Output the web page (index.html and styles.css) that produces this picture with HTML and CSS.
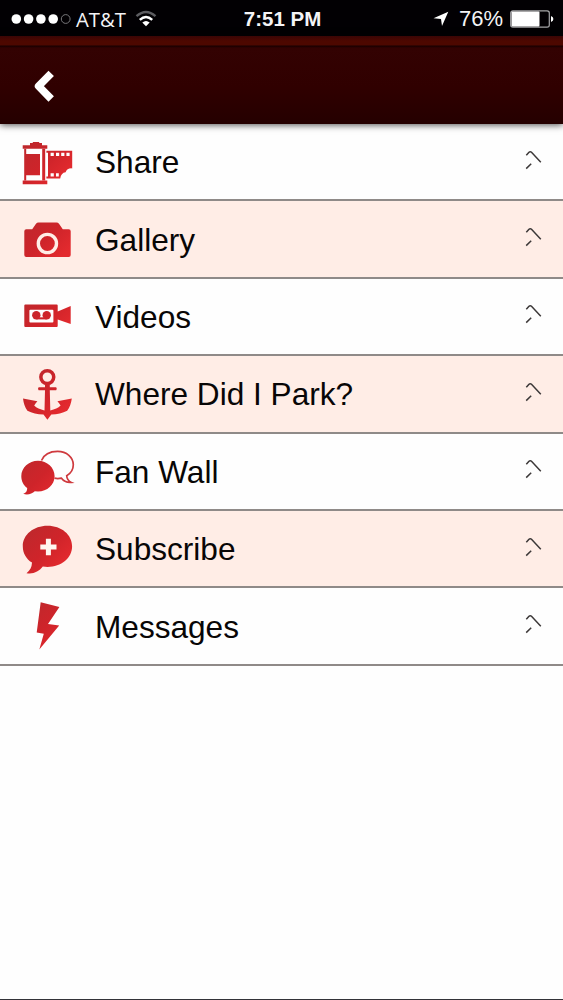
FILE: index.html
```
<!DOCTYPE html>
<html lang="en">
<head>
  <meta charset="UTF-8" />
  <meta name="viewport" content="width=device-width, initial-scale=1" />
  <title>More</title>
  <link rel="stylesheet" href="styles.css">
</head>
<body>
  <div class="status-bar">
    <div class="status-left">
      <svg class="signal" width="60" height="12" viewBox="0 0 60 12">
        <circle cx="5.3" cy="6" r="4.8" />
        <circle cx="17.6" cy="6" r="4.8" />
        <circle cx="29.9" cy="6" r="4.8" />
        <circle cx="42.2" cy="6" r="4.8" />
        <circle class="empty" cx="54.7" cy="6" r="4.4" />
      </svg>
      <span class="carrier">AT&amp;T</span>
      <svg class="wifi" width="22" height="18" viewBox="0 0 22 18">
        <path class="weak" d="M1.5 6.2Q11 -2.2 20.5 6.2" />
        <path d="M4.8 9.8Q11 4 17.2 9.8" />
        <path class="dot" d="M7.3 12.5Q11 9.4 14.7 12.5L11 16.3Z" />
      </svg>
    </div>
    <div class="clock">7:51 PM</div>
    <div class="status-right">
      <svg class="location" width="16" height="16" viewBox="0 0 16 16">
        <path d="M15.3 .7L9 15L8 8L.5 7.2Z" />
      </svg>
      <span class="percent">76%</span>
      <svg class="battery" width="44" height="18" viewBox="0 0 44 18">
        <rect class="shell" x=".7" y=".8" width="38.6" height="16.4" rx="2.2" />
        <rect x="1.5" y="1.6" width="28" height="14.8" rx="1" />
        <path d="M41 6Q43.4 7 43.4 9T41 12Z" />
      </svg>
    </div>
  </div>

  <header class="navbar">
    <a class="back" href="#" aria-label="Back">
      <svg width="24" height="34" viewBox="0 0 24 34">
        <path d="M18.2 4.4L5.6 17.2L18.2 30" />
      </svg>
    </a>
  </header>

  <!-- shared fill and arrow -->
  <svg class="defs" width="0" height="0">
    <defs>
      <linearGradient id="red" x1="0" y1="0" x2="64" y2="64" gradientUnits="userSpaceOnUse">
        <stop offset=".1" stop-color="#b9292d" />
        <stop offset=".5" stop-color="#cf242a" />
        <stop offset=".75" stop-color="#e32a2e" />
      </linearGradient>
      <symbol id="arrow" viewBox="0 0 20 24">
        <path d="M3.3 5.3L6 2.3Q7.2 1 8.5 2.3L17.8 12.2M3.2 18.6L8.2 13.8" />
      </symbol>
    </defs>
  </svg>

  <ul class="menu">
    <li>
      <svg class="icon" viewBox="0 0 64 64">
        <path d="M15 15.2V13H17.8V12H24.2V13H27V15.2H32.3V18.7H7.7V15.2ZM7.7 50.6H32.3V54.2H7.7Z" />
        <path d="M9.2 18.7H11.2V50.6H9.2ZM11.2 24H25V45.2H11.2ZM27.2 18.7H30.2V50.6H27.2Z" />
        <path fill-rule="evenodd" d="M31.4 20.8H57.2V38.4Q52 38 50.6 42.2Q46 42.8 45.2 48.6H31.4ZM35.6 22.8V26H38.8V22.8ZM41 22.8V26H44.2V22.8ZM46.2 22.8V26H49.4V22.8ZM51.4 22.8V26H54.6V22.8ZM35.6 43.2V46.4H38.8V43.2ZM41 43.2V46.4H43.8V43.2ZM31.4 22.8V46.4H33V22.8Z" />
      </svg>
      <span class="label">Share</span>
      <svg class="arrow"><use href="#arrow" /></svg>
    </li>
    <li>
      <svg class="icon" viewBox="0 0 64 64">
        <path d="M11.3 22.3H17.2L21 16.8Q21.9 15.5 23.5 15.5H41.5Q43.1 15.5 44 16.8L47.8 22.3H53.7Q55.7 22.3 55.7 24.3V47.9Q55.7 49.9 53.7 49.9H11.3Q9.3 49.9 9.3 47.9V24.3Q9.3 22.3 11.3 22.3Z" />
        <circle class="lens" cx="32.4" cy="36.5" r="9.1" />
      </svg>
      <span class="label">Gallery</span>
      <svg class="arrow"><use href="#arrow" /></svg>
    </li>
    <li>
      <svg class="icon" viewBox="0 0 64 64">
        <path d="M10.3 20.5H41.7Q42.7 20.5 42.7 21.5V27.4L55.7 22V40L42.7 35.4V42.1Q42.7 43.1 41.7 43.1H10.3Q9.3 43.1 9.3 42.1V21.5Q9.3 20.5 10.3 20.5Z" />
        <rect class="cut" x="14.4" y="25.7" width="24" height="12.8" rx="1" />
        <circle cx="21.3" cy="31.2" r="4.2" />
        <circle cx="31.7" cy="31.2" r="4.2" />
        <path d="M21.3 33.3H31.7V35.4H21.3Z" />
      </svg>
      <span class="label">Videos</span>
      <svg class="arrow"><use href="#arrow" /></svg>
    </li>
    <li>
      <svg class="icon" viewBox="0 0 64 64">
        <path fill-rule="evenodd" d="M32.3 6.9A8.2 8.2 0 1 0 32.3 23.3A8.2 8.2 0 1 0 32.3 6.9ZM32.3 10.4A4.7 4.7 0 1 1 32.3 19.8A4.7 4.7 0 1 1 32.3 10.4Z" />
        <path d="M30 22.5H34.8V25.2H41.2Q42.4 26.7 41.2 28.3H34.8L35.3 48.4Q42 47.3 45.6 43.6Q43.8 40.6 42.4 39.2L56.8 36.4Q55.8 44 52.2 48.8Q45.4 52.4 36.3 52.6L32.4 57.8L28.5 52.6Q19.2 52.4 12.4 48.8Q8.9 44 8 36.4L22.4 39.2Q21 40.6 19.2 43.6Q22.8 47.3 29.5 48.4L30 28.3H23.6Q22.4 26.7 23.6 25.2H30Z" />
      </svg>
      <span class="label">Where Did I Park?</span>
      <svg class="arrow"><use href="#arrow" /></svg>
    </li>
    <li>
      <svg class="icon" viewBox="0 0 64 64">
        <path class="outline" d="M26.5 21.5C29 15.5 35 12.4 42.6 12.4C51.7 12.4 58.3 18.3 58.3 25.7C58.3 30.4 55.6 34.4 51.7 36.7C51.9 40 53.8 42.2 56.4 43.4C52 43.8 48.5 42.2 46.3 39.1C43.5 39.8 41.5 39.6 39.5 39.2" />
        <path d="M23 21.8C32.2 21.8 39.6 28.7 39.6 37.2C39.6 45.7 32.2 52.5 23 52.5L19.8 52.3C17 55.2 12 56.3 8.2 54.8C11 53.8 12.3 52 12.2 49C8.6 46.3 6.3 42 6.3 37.2C6.3 28.7 13.8 21.8 23 21.8Z" />
      </svg>
      <span class="label">Fan Wall</span>
      <svg class="arrow"><use href="#arrow" /></svg>
    </li>
    <li>
      <svg class="icon" viewBox="0 0 64 64">
        <path d="M32.5 8.8C46.4 8.8 57.1 17.8 57.1 29.2C57.1 40.8 46.4 49.9 32.5 49.9L27.8 49.6C23.8 54.8 18.5 57.3 11.5 56.2C14.9 53.8 16.8 50.5 17 45.6C11 41.8 7.8 36 7.8 29.2C7.8 17.8 18.6 8.8 32.5 8.8Z" />
        <path class="plus" d="M30.9 21.7H35.9V27.5H41.5V32.4H35.9V38.2H30.9V32.4H25.3V27.5H30.9Z" />
      </svg>
      <span class="label">Subscribe</span>
      <svg class="arrow"><use href="#arrow" /></svg>
    </li>
    <li>
      <svg class="icon" viewBox="0 0 64 64">
        <path d="M25.7 8.2L44.4 12.9L33 29.9L44.2 31.4L24.3 55.6L28.8 39.7L21.7 38.6Z" />
      </svg>
      <span class="label">Messages</span>
      <svg class="arrow"><use href="#arrow" /></svg>
    </li>
  </ul>
</body>
</html>
```
FILE: styles.css
```
* {
  margin: 0;
  padding: 0;
  box-sizing: border-box;
}

body {
  display: flex;
  flex-direction: column;
  height: 100vh;
  background: #fefefe;
  border-bottom: 1px solid #333338;
  color: #080606;
  font-family: "Liberation Sans", Arial, sans-serif;
  overflow: hidden;
}

.defs {
  position: absolute;
}

/* status bar */
.status-bar {
  display: grid;
  grid-template-columns: 1fr auto 1fr;
  align-items: center;
  height: 36px;
  padding: 2px 9px 0 11px;
  background: #020003;
  color: #f4f4f6;
  font-size: 22px;
}

.status-bar svg {
  fill: #fff;
}

.status-left,
.status-right {
  display: flex;
  align-items: center;
}

.status-right {
  justify-content: flex-end;
}

.signal .empty {
  fill: none;
  stroke: #77777a;
}

.carrier {
  margin-left: 5px;
  font-family: "Open Sans", "Noto Sans", sans-serif;
  font-size: 20.3px;
  line-height: 30px;
}

.wifi {
  margin-left: 9px;
}

.wifi path {
  fill: none;
  stroke: #fff;
  stroke-width: 2.4;
}

.wifi .weak {
  stroke: #5c5c60;
}

.wifi .dot {
  fill: #fff;
  stroke: none;
}

.clock {
  font-size: 20.5px;
  font-weight: bold;
}

.percent {
  margin: 0 7px 0 10px;
}

.battery .shell {
  fill: none;
  stroke: #a5a5a8;
  stroke-width: 1.2;
}

/* nav bar */
.navbar {
  position: relative;
  flex: none;
  display: flex;
  align-items: center;
  height: 88px;
  padding: 11px 33px 0;
  background: linear-gradient(#3a0505 0, #4d0800 5px, #4d0800 9px, #180000 10px, #330202 12px, #300000 50px, #250000 100%);
  box-shadow: 0 1px 7px rgba(0, 0, 0, 0.7);
}

.back {
  display: flex;
}

.back path {
  fill: none;
  stroke: #fff;
  stroke-width: 7.6;
  stroke-linejoin: round;
}

/* menu */
.menu {
  list-style: none;
}

.menu li {
  display: flex;
  align-items: center;
  height: 77.4px;
  padding: 0 20px 0 15px;
  border-bottom: 2px solid #8f8a88;
}

.menu li:nth-child(even) {
  background: #ffede6;
}

.icon {
  width: 64px;
  height: 64px;
  fill: url(#red);
}

.icon .lens {
  fill: none;
  stroke: #ffede6;
  stroke-width: 3.4;
}

.icon .cut {
  fill: #fefefe;
}

.icon .plus {
  fill: #fff5f0;
}

.icon .outline {
  fill: none;
  stroke: #cf3a3e;
  stroke-width: 1.7;
}

.label {
  flex: 1;
  padding: 2px 0 0 16px;
  font-size: 31.6px;
}

.arrow {
  width: 20px;
  height: 24px;
  fill: none;
  stroke: #3c3838;
  stroke-width: 1.5;
}
```
